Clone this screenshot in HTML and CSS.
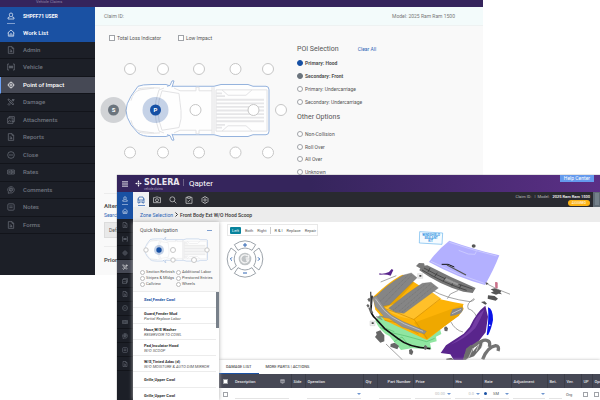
FILE: index.html
```html
<!DOCTYPE html>
<html lang="en">
<head>
<meta charset="utf-8">
<title>Qapter</title>
<link rel="stylesheet" href="styles.css">
</head>
<body>
<svg class="defs" aria-hidden="true">
  <symbol id="i-user" viewBox="0 0 24 24"><path d="M12 3a5 5 0 0 1 5 5c0 3-2 6-5 6s-5-3-5-6a5 5 0 0 1 5-5zM9 14l-6 3v4h18v-4l-6-3"/></symbol>
  <symbol id="i-home" viewBox="0 0 24 24"><path d="M2 12 12 3l10 9M4 10.500v11h16v-11M9 21v-4a3 3 0 0 1 6 0v4"/></symbol>
  <symbol id="i-doc" viewBox="0 0 24 24"><path d="M4 2h11l5 5v15H4zM15 2v5h5M8 12h5M8 17h8M13 12v5"/></symbol>
  <symbol id="i-vehicle" viewBox="0 0 24 24"><path d="M6 3H2v18h4M18 3h4v18h-4M7 8v8M10 8v8M14 8v8M17 8v8M7 12h10"/></symbol>
  <symbol id="i-target" viewBox="0 0 24 24"><circle cx="12" cy="12" r="7.500"/><circle cx="12" cy="12" r="3"/><path d="M12 1.500v4M12 18.500v4M1.500 12h4M18.500 12h4"/></symbol>
  <symbol id="i-tools" viewBox="0 0 24 24"><path d="M3 3l4 1 13 14-2 3L4 7zM14 9l5-6 3 3-5 5M9 13l-6 6 3 3 6-6M17 3v4h4"/></symbol>
  <symbol id="i-attach" viewBox="0 0 24 24"><path d="M6 6V2h16v15h-4M2 6h16v16H2zM3 19l5-6 4 4 3-3 3 4M13 10h1"/></symbol>
  <symbol id="i-minus" viewBox="0 0 24 24"><circle cx="12" cy="12" r="10"/><path d="M6 12h12"/></symbol>
  <symbol id="i-rates" viewBox="0 0 24 24"><path d="M2 6h20v12H2zM13 6v12M6 9v6M9 9v6"/><circle cx="17.500" cy="12" r="2"/></symbol>
  <symbol id="i-comment" viewBox="0 0 24 24"><path d="M12 2a10 9.500 0 1 1-3 18.600L4 22v-5A10 9.500 0 0 1 12 2z"/><path d="M7 9h10M7 13h7"/><circle cx="12" cy="11" r="5"/></symbol>
  <symbol id="i-note" viewBox="0 0 24 24"><rect x="2.500" y="2.500" width="19" height="19" rx="3"/><path d="M7 9h10M7 14h10"/></symbol>
  <symbol id="i-car" viewBox="0 0 24 24"><path d="M3 21v-9l3-9h12l3 9v9h-4v-3H7v3zM3 12h18M6 15h2M16 15h2M1 9h3M20 9h3"/></symbol>
  <symbol id="i-camera" viewBox="0 0 24 24"><path d="M1.500 5h5l2-2h7l2 2h5v15h-21z"/><circle cx="12" cy="12.500" r="4.500"/><path d="M19 8h1"/></symbol>
  <symbol id="i-search" viewBox="0 0 24 24"><circle cx="10" cy="10" r="7.500"/><path d="M15.500 15.500 22 22"/></symbol>
  <symbol id="i-clip" viewBox="0 0 24 24"><path d="M8 4H3v18h18V4h-5M8 2h8v5H8zM7 14l3 3 6-6"/></symbol>
  <symbol id="i-gear" viewBox="0 0 24 24"><path d="M10 2h4l1 3 3-1 3 3-1 3 2.500 2-2.500 2 1 3-3 3-3-1-1 3h-4l-1-3-3 1-3-3 1-3-2.500-2L4 10 3 7l3-3 3 1z"/><circle cx="12" cy="12" r="3.500"/></symbol>
  <symbol id="i-cols" viewBox="0 0 24 24"><path d="M3 3h18v14H3zM3 8h18M9 3v14M15 3v14M8 21h8"/></symbol>
  <symbol id="truck" viewBox="0 -3 146 68" preserveAspectRatio="none">
    <path class="body" d="M14 4Q18 2 28 2H42L47 4H90L97 2H124L129 4H142Q145 4 145 8V54Q145 58 142 58H129L124 60H97L90 58H47L42 60H28Q18 60 14 56L7 47Q2 38 2 31T7 15z"/>
    <path class="body" d="M43 4 46 3 48-2 50-2 48 5M43 58 46 59 48 64 50 64 48 57"/>
    <path class="line" d="M14 7Q20 5 36 6M14 55Q20 57 36 56M7 20Q9 10 16 8L30 6M7 42Q9 52 16 54L30 56M35 8Q31 20 31 31T35 54L40 56M35 8 40 6M38 9Q34 20 34 31T38 53L55 50Q58 40 57 31T55 12zM50 6 56 9H72V5H75V9H88M50 56 56 53H72V57H75V53H88M88 5V57M90 5V57M92 8H143V54H92zM98 8 104 14H122L128 8M98 54 104 48H122L128 54"/>
    <path class="slat" d="M92 19H140M92 23H140M92 27H140M92 31H140M92 35H140M92 39H140M92 43H140M92 12H98M92 15H101M92 47H101M92 50H98"/>
  </symbol>
</svg>

<main class="desktop">
  <section class="window window-back" aria-label="Point of impact">
    <header class="strip"><span>Vehicle Claims</span></header>
    <div class="back-body">
      <nav class="sidebar">
        <div class="account"><svg class="icon"><use href="#i-user"/></svg><span>SHPFF71 USER</span></div>
        <ul class="menu">
          <li class="home"><a href="#"><svg class="icon"><use href="#i-home"/></svg>Work List</a></li>
          <li><a href="#"><svg class="icon"><use href="#i-doc"/></svg>Admin</a></li>
          <li><a href="#"><svg class="icon"><use href="#i-vehicle"/></svg>Vehicle</a></li>
          <li class="current"><a href="#"><svg class="icon"><use href="#i-target"/></svg>Point of Impact</a></li>
          <li><a href="#"><svg class="icon"><use href="#i-tools"/></svg>Damage</a></li>
          <li><a href="#"><svg class="icon"><use href="#i-attach"/></svg>Attachments</a></li>
          <li><a href="#"><svg class="icon"><use href="#i-doc"/></svg>Reports</a></li>
          <li><a href="#"><svg class="icon"><use href="#i-minus"/></svg>Close</a></li>
          <li><a href="#"><svg class="icon"><use href="#i-rates"/></svg>Rates</a></li>
          <li><a href="#"><svg class="icon"><use href="#i-comment"/></svg>Comments</a></li>
          <li><a href="#"><svg class="icon"><use href="#i-note"/></svg>Notes</a></li>
          <li><a href="#"><svg class="icon"><use href="#i-doc"/></svg>Forms</a></li>
        </ul>
      </nav>
      <div class="content">
        <div class="claim-bar"><span>Claim ID:</span><span>Model: 2025 Ram Ram 1500</span></div>
        <div class="impact">
          <div class="impact-left">
            <div class="flags">
              <label><input type="checkbox"> Total Loss Indicator</label>
              <label><input type="checkbox"> Low Impact</label>
            </div>
            <svg class="impact-map" viewBox="100 60 190 100" role="img" aria-label="Vehicle impact points">
              <use href="#truck" x="124" y="80" width="146" height="61"/>
              <g class="spots">
                <circle cx="130" cy="69" r="5.500"/><circle cx="163" cy="69" r="5.500"/><circle cx="199" cy="69" r="5.500"/><circle cx="235.500" cy="69" r="5.500"/><circle cx="268" cy="69" r="5.500"/>
                <circle cx="195.500" cy="110" r="5.500"/><circle cx="253.500" cy="110" r="5.500"/><circle cx="281" cy="110" r="5.500"/>
                <circle cx="130" cy="152.500" r="5.500"/><circle cx="163" cy="152.500" r="5.500"/><circle cx="199" cy="152.500" r="5.500"/><circle cx="235.500" cy="152.500" r="5.500"/><circle cx="268" cy="152.500" r="5.500"/>
              </g>
              <circle class="halo-s" cx="113.500" cy="110" r="13"/><circle class="dot-s" cx="113.500" cy="110" r="5.500"/>
              <circle class="halo-p" cx="155.500" cy="110" r="13"/><circle class="dot-p" cx="155.500" cy="110" r="5.500"/>
              <text x="113.500" y="112">S</text><text x="155.500" y="112">P</text>
            </svg>
          </div>
          <div class="impact-right">
            <div class="poi-head"><h2>POI Selection</h2><a href="#">Clear All</a></div>
            <div class="options first">
              <label class="strong"><input class="blue" type="radio" name="p1" checked> Primary: Hood</label>
              <label class="strong"><input class="grey" type="radio" name="p2" checked> Secondary: Front</label>
              <label><input type="radio" name="p1"> Primary: Undercarriage</label>
              <label><input type="radio" name="p2"> Secondary: Undercarriage</label>
            </div>
            <h2>Other Options</h2>
            <div class="options">
              <label><input type="radio" name="o"> Non-Collision</label>
              <label><input type="radio" name="o"> Roll Over</label>
              <label><input type="radio" name="o"> All Over</label>
              <label><input type="radio" name="o"> Unknown</label>
            </div>
          </div>
        </div>
        <div class="alternate">
          <h3>Alternate</h3>
          <a href="#">Search</a>
          <button type="button">Default</button>
        </div>
        <h3 class="prior">Prior</h3>
      </div>
    </div>
  </section>

  <section class="window window-front" aria-label="Damage">
    <header class="brand">
      <svg class="burger" viewBox="0 0 7 7"><path d="M0 1h7M0 3.500h7M0 6h7"/></svg>
      <svg class="mark" viewBox="0 0 14 14"><path d="M7 0l2 4.500H5zM7 14l2-4.500H5zM0 7l4.500-2v4zM14 7 9.500 5v4zM7 5l2 2-2 2-2-2z"/></svg>
      <div class="logo"><span class="logo-name">SOLERA</span><span class="logo-tag">vehicle claims</span></div>
      <span class="product">Qapter</span>
      <a class="help" href="#">Help Center</a>
    </header>
    <div class="front-body">
      <nav class="rail">
        <div class="account"><svg class="icon"><use href="#i-user"/></svg></div>
        <ul class="menu">
          <li class="home"><a href="#" aria-label="Work List"><svg class="icon"><use href="#i-home"/></svg></a></li>
          <li><a href="#" aria-label="Admin"><svg class="icon"><use href="#i-doc"/></svg></a></li>
          <li><a href="#" aria-label="Vehicle"><svg class="icon"><use href="#i-vehicle"/></svg></a></li>
          <li><a href="#" aria-label="Point of Impact"><svg class="icon"><use href="#i-target"/></svg></a></li>
          <li class="current"><a href="#" aria-label="Damage"><svg class="icon"><use href="#i-tools"/></svg></a></li>
          <li><a href="#" aria-label="Attachments"><svg class="icon"><use href="#i-attach"/></svg></a></li>
          <li><a href="#" aria-label="Reports"><svg class="icon"><use href="#i-doc"/></svg></a></li>
          <li><a href="#" aria-label="Close"><svg class="icon"><use href="#i-minus"/></svg></a></li>
          <li><a href="#" aria-label="Rates"><svg class="icon"><use href="#i-rates"/></svg></a></li>
          <li><a href="#" aria-label="Comments"><svg class="icon"><use href="#i-comment"/></svg></a></li>
          <li><a href="#" aria-label="Notes"><svg class="icon"><use href="#i-note"/></svg></a></li>
          <li><a href="#" aria-label="Forms"><svg class="icon"><use href="#i-doc"/></svg></a></li>
        </ul>
      </nav>
      <div class="work">
        <div class="toolbar">
          <button class="on" type="button" aria-label="Vehicle"><svg class="icon"><use href="#i-car"/></svg></button>
          <button type="button" aria-label="Photos"><svg class="icon"><use href="#i-camera"/></svg></button>
          <button type="button" aria-label="Find"><svg class="icon"><use href="#i-search"/></svg></button>
          <button type="button" aria-label="Checklist"><svg class="icon"><use href="#i-clip"/></svg></button>
          <button type="button" aria-label="Settings"><svg class="icon"><use href="#i-gear"/></svg></button>
          <div class="claim-info">
            <div class="claim-line"><span>Claim ID:</span><span>|&nbsp; Model:</span><b>2025 Ram Ram 1500</b></div>
            <span class="badge">ASSIGNED</span>
          </div>
          <div class="edge"></div>
        </div>
        <div class="crumbs"><a href="#">Zone Selection</a><svg viewBox="0 0 3 5"><path d="M.5.5l2 2-2 2"/></svg><b>Front Body Ext W/O Hood Scoop</b></div>
        <div class="panes">
          <aside class="parts">
            <div class="quick">
              <div class="quick-head"><span>Quick Navigation</span><i></i></div>
              <svg class="quick-map" viewBox="0 0 68 26" role="img" aria-label="Vehicle zones">
                <use href="#truck" x="2" y="0" width="64" height="26"/>
                <g class="spots"><circle cx="4" cy="13" r="2.200"/><circle cx="31" cy="13" r="2.500"/><circle cx="65" cy="13" r="2.200"/><circle cx="31" cy="23" r="2.200"/><circle cx="52" cy="23" r="2.500"/></g>
                <circle class="halo-p" cx="17" cy="13" r="5"/><circle class="dot-p" cx="17" cy="13" r="2.700"/>
              </svg>
              <div class="quick-options">
                <label><input type="radio" name="q"> Section Refinish</label><label><input type="radio" name="q"> Additional Labor</label>
                <label><input type="radio" name="q"> Stripes &amp; Mldgs</label><label><input type="radio" name="q"> Prestored Entries</label>
                <label><input type="radio" name="q"> Callview</label><label><input type="radio" name="q"> Wheels</label>
              </div>
            </div>
            <ul class="part-list">
              <li class="picked"><b>Seal,Fender Cowl</b></li>
              <li><b>Guard,Fender Mud</b><em>Partial Replace Labor</em></li>
              <li><b>Hose,W/S Washer</b><em>RESERVOIR TO COWL</em></li>
              <li><b>Pad,Insulator Hood</b><em>W/O SCOOP</em></li>
              <li><b>W/S,Tinted Adas (d)</b><em>W/O MOISTURE &amp; AUTO DIM MIRROR</em></li>
              <li><b>Grille,Upper Cowl</b></li>
              <li><b>Grille,Upper Cowl</b></li>
            </ul>
          </aside>
          <div class="stage">
            <div class="view">
              <div class="controls">
                <div class="filters">
                  <button class="on" type="button">Left</button><button type="button">Both</button><button type="button">Right</button><button class="split" type="button">R &amp; I</button><button type="button">Replace</button><button type="button">Repair</button>
                </div>
                <svg class="wheel" viewBox="0 0 114 114" role="img" aria-label="Pan and zoom">
                  <g class="ring"><path d="M25 14Q57-9 89 14L78 31Q57 17 36 31zM25 100Q57 123 89 100L78 83Q57 97 36 83zM15 24Q-8 57 15 90L31 78Q18 57 31 36zM99 24Q122 57 99 90L83 78Q96 57 83 36z"/></g>
                  <circle class="hub" cx="57" cy="57" r="19"/><path class="turn" d="M65 48a12 12 0 1 0 3 12h-8M68 44v10h-9"/>
                  <path class="arrows" d="M57 9v12M51 15h12M51 99h12M18 52l-5 5 5 5M96 52l5 5-5 5"/>
                </svg>
              </div>
              <svg class="diagram" viewBox="0 6 480 414" role="img" aria-label="Front body parts">
                <g class="kit"><path d="M209 35 278 39 276 73 208 69z"/><text x="243" y="48">WINDSHIELD</text><text x="243" y="57">SEALANT</text><text x="242" y="66">KIT</text></g>
                <path fill="#b3b0ff" d="M298 62Q375 89 448 106 432 148 405 195 325 174 237 126 262 90 298 62z"/>
                <path fill="none" stroke="#d5d4ff" stroke-width="2" d="M298 67Q370 91 440 108M326 91l29 11 20 1 4-9M243 124q80 42 160 66"/>
                <path fill="none" stroke="#111" stroke-width="3" d="M275 133q20-4 38 8"/><path fill="none" stroke="#555" stroke-width="4" d="M291 135 348 165"/>
                <ellipse cx="371" cy="78" rx="6" ry="5" fill="#555"/>
                <path fill="#777" d="M198 138l9-9 15 1 2 6-14 9zM214 138l18-2Q300 172 377 204l-9 15-28-4Q270 196 208 151z"/>
                <path fill="none" stroke="#333" stroke-width="2" d="M222 144Q290 183 368 207M216 150Q285 191 350 211M240 144l-6 12M262 158l-8 12M287 172l-8 12M311 184l-6 13M333 194l-5 12"/>
                <path fill="#9a9a9a" d="M288 174l39 17-5 5-38-16z"/>
                <path fill="#59258c" d="M88 160q12 3 29-4l8-9 5 3-8 17q-12-5-34-3z"/><path fill="none" stroke="#777" stroke-width="2" d="M92 186 139 167"/>
                <path fill="#eee" stroke="#bbb" d="M203 161h15v14h-15zM60 303h15v14H60z"/><path fill="#444" d="M208 165h6v5h-6zM65 307h6v5h-6z"/>
                <path fill="none" stroke="#777" stroke-width="2" d="M245 210Q290 236 360 245q16-4 12-9-25 15-17 31 15 2 26 25l2 24M325 211l-24 11-9 14M302 305q14 26 37 31M408 190l35 18 38 15"/>
                <path fill="#555" d="M407 187l9 3-8 5zM422 208l12-3 20 7-3 6 5 5-10-2-8 3-16-6 9-4zM414 226l20 2 10 8-7 6-24-6zM393 246l11-2 7 7-5 3z"/>
                <path fill="#ca7189" d="M435 187q5-3 8 1v17h-7z"/>
                <path fill="#90e6a1" d="M76 302Q90 335 118 348L153 390 185 385 244 388 240 369 260 364 258 350 274 342 269 323 230 300 100 270z"/>
                <path fill="none" stroke="#55bd6c" stroke-width="2" d="M90 322l34 16 40 9 66 18 24-10M132 365l24-14 25 31M107 325l26 10"/>
                <path fill="#fdb307" d="M158 164Q125 178 69 231L76 269 104 301 140 318 231 360 326 286 341 252Q306 246 268 237L224 207z"/>
                <path fill="#e8a300" d="M161 166 191 188 126 262 101 266 87 245 70 232z"/>
                <path fill="#efa800" d="M229 358 192 308 337 255 341 267 326 288z"/>
                <path fill="#ffc02a" d="M101 264 123 255 240 212 274 236 192 297q-43 1-91-33z"/>
                <path fill="none" stroke="#d18c00" stroke-width="2" d="M101 265l42 14 50 20 39 58M104 301l42 8 60 33M192 298l78-61"/>
                <path class="mesh" d="M161 165l23-6 17 14-83 81-19 4-22-27q32-36 84-66zM217 190l26-3 22 17-103 76-25-3-21-12q55-46 101-75z"/>
                <path fill="none" stroke="#555" stroke-width="1" stroke-dasharray="3 3" d="M172 168 88 246M184 166 102 251M226 193 130 270M240 193 146 275M252 198 154 278"/>
                <path fill="#888" d="M301 282l7-14 29-6q5 9-5 18-19 8-31 9z"/><path fill="none" stroke="#ddd" stroke-width="2" d="M306 281l27-13"/>
                <path fill="#929292" stroke="#777" d="M68 232l12-4 25 38 19 19 33 19 72 30-6 8-66-21-40-26-28-5 8 10-19-10 24-1-26-29z"/>
                <path fill="none" stroke="#d7d7d7" stroke-width="2" d="M76 236l26 35 22 19 40 22 55 22"/>
                <path fill="none" stroke="#101010" stroke-width="5" d="M66 227 63 265q-3 16 15 32l26 29 40 30q33 27 97 30"/>
                <path fill="none" stroke="#555" stroke-width="4" d="M62 215l1 40"/>
                <path fill="#666" d="M52 238l6-5 5 8-6 5zM49 256l5-4 5 6-5 5zM55 264l7-3 8 18-9 1zM78 336l13-5 6 8 6 7v18l-12 4-16-17 5-7zM122 372l12-4 13 10-5 10-21-8zM177 390l7-4 6 9-4 10-8-3zM282 323l6-4 6 6-2 9-8-1zM222 378l5-3 6 7-5 8-6-2z"/>
                <path fill="none" stroke="#777" stroke-width="2" d="M108 372 158 420"/>
                <path fill="#59258c" d="M406 257q-27 20-47 64l-18 20-53 35-16 23 29 4 11 18h34l15-33 20-18 26-33 7-47z"/>
                <path fill="#743da5" d="M403 268q-25 20-37 52-18 25-65 54 43-16 75-50 20-34 27-56z"/>
                <path fill="#0913e8" d="M414 262q15 4 15 38-5 28-15 46l-4-2q7-44 4-82z"/><circle cx="419" cy="316" r="2.500" fill="#fff"/>
                <path fill="none" stroke="#747474" stroke-width="10" d="M344 419q5-30 30-43 28-21 38-14 10 3 6 19M398 418q14-37 39-41 12 1 7 16"/>
                <path fill="#6c6c6c" d="M348 386l15-12 8 7-3 14 20-24 11-8-4 19-23 27-31 11z"/><path fill="none" stroke="#ddd" stroke-width="2" d="M369 384l-15 34M387 372l-8 22M401 366l-7 18"/>
                <path fill="#444" d="M289 416l15-2 8 5h-23z"/>
              </svg>
            </div>
            <div class="bottom">
              <div class="tabs"><a class="on" href="#">DAMAGE LIST</a><a href="#">MORE PARTS | ACTIONS</a></div>
              <table>
                <colgroup><col class="c14"><col class="c58"><col class="c14"><col class="c58"><col class="c14"><col class="c36"><col class="c40"><col class="c29"><col class="c29"><col class="c36"><col class="c17"><col class="c17"><col class="c11"><col></colgroup>
                <thead><tr><th><input type="checkbox" aria-label="Select all"></th><th><div class="with-icon">Description<svg class="icon"><use href="#i-cols"/></svg></div></th><th>Side</th><th>Operation</th><th>Qty</th><th class="end">Part Number</th><th>Price</th><th>Hrs</th><th>Rate</th><th>Adjustment</th><th>Bet.</th><th>Ver.</th><th>UP</th><th>Ope</th></tr></thead>
                <tbody><tr><td><input type="checkbox" aria-label="Select row"></td><td><div class="field"></div></td><td></td><td><div class="field"><i class="caret"></i></div></td><td></td><td><div class="field"></div></td><td><div class="field faint">00.00<i class="caret"></i></div></td><td><div class="field faint">0.0<i class="caret"></i></div></td><td><div class="field rate"><i class="bullet"></i>SM<i class="caret"></i></div></td><td><div class="field"><i class="caret"></i></div></td><td><div class="field"></div></td><td>Org</td><td><input type="checkbox" aria-label="UP"></td><td><input type="checkbox" aria-label="Open"></td></tr></tbody>
              </table>
            </div>
          </div>
        </div>
      </div>
    </div>
  </section>
</main>
</body>
</html>
```
FILE: styles.css
```css
* { box-sizing: border-box; }
body { margin: 0; background: #fff; color: #555; font: 5px/6px Roboto, "Liberation Sans", sans-serif; }
h2, h3, ul { margin: 0; padding: 0; }
ul { list-style: none; }
a { color: #2b63b5; text-decoration: none; }
button { font: inherit; color: inherit; border: 0; padding: 0; background: none; white-space: nowrap; }
.defs { position: absolute; width: 0; height: 0; }
.icon { display: block; width: 8px; height: 8px; fill: none; stroke: currentColor; stroke-width: 2; flex: none; }
input { appearance: none; flex: none; margin: 0; width: 6px; height: 6px; border: 1px solid #a0a3a8; background: #fff; }
input[type="radio"] { border-radius: 50%; }
label { display: flex; align-items: center; gap: 2px; white-space: nowrap; }

.desktop { position: relative; height: 100vh; overflow: hidden; }
.window { position: absolute; overflow: hidden; display: flex; flex-direction: column; }
.window-back { left: 0; top: 0; width: calc(100% - 117px); height: 275px; background: #f9f9f9; }
.window-front { left: 117px; top: 175px; right: 0; bottom: 0; background: #fff; box-shadow: 0 0 1px #666; }

/* Impact window */
.strip { flex: none; height: 7px; padding-left: 36px; background: #35245c; color: #8f86a8; font-size: 4px; line-height: 4px; }
.back-body { flex: 1; display: flex; }
.sidebar { flex: none; width: 95px; background: #1c1f27; font-size: 6px; line-height: 8px; }
.account { background: #1a51a3; color: #fff; font-weight: 700; }
.sidebar .account { display: flex; align-items: center; gap: 8px; height: 17px; padding-left: 7px; font-size: 5px; background: linear-gradient(#7f9fd0, #7f9fd0) 7px 16px / 8px 1px no-repeat #1a51a3; }
.menu { display: grid; grid-template-rows: repeat(12, 1fr); }
.sidebar .menu { height: 210px; }
.menu li { border-bottom: 1px solid #12141a; color: #717680; }
.menu a { display: flex; align-items: center; gap: 8px; height: 100%; color: inherit; font-weight: 500; }
.sidebar .menu a { padding-left: 7px; }
.menu .home { background: #1a51a3; color: #fff; border-color: #1a51a3; }
.menu .current { background: #464955; color: #fff; }
.sidebar .current { border-left: 1px solid #6ba0f5; }
.sidebar .current a { padding-left: 6px; }
.sidebar .home a { border-top: 1px solid transparent; }
.content { flex: 1; min-width: 0; }
.claim-bar { display: flex; justify-content: space-between; align-items: center; height: 19px; padding: 0 28px 0 9px; background: #f3fbfb; border-bottom: 1px solid #eef2f2; color: #777; }
.impact { display: flex; height: 167px; }
.impact-left { flex: none; width: 202px; }
.flags { display: flex; gap: 17px; padding: 9px 0 0 14px; }
.impact-map { display: block; width: 190px; height: 100px; margin: 19px 0 0 5px; overflow: visible; }
.body { fill: #fefefe; stroke: #8eaedb; stroke-width: 1; }
.line { fill: none; stroke: #e0e0e2; stroke-width: 1; }
.slat { fill: none; stroke: #e6e6e8; stroke-width: 2; }
.spots circle { fill: #fff; stroke: #c6c6c6; stroke-width: 1; }
.halo-s { fill: #6b747d; opacity: .28; }
.halo-p { fill: #1a51a3; opacity: .25; }
.dot-s { fill: #6b747d; }
.dot-p { fill: #1650a4; }
.impact-map text { fill: #fff; font-size: 6px; font-weight: 700; text-anchor: middle; }
.impact-right { padding-top: 19px; }
h2 { font-size: 7px; line-height: 8px; font-weight: 400; }
.poi-head { display: flex; align-items: center; gap: 19px; }
.options { display: grid; grid-template-rows: repeat(4, 1fr); height: 50px; margin-top: 7px; }
.options.first { height: 52px; margin: 3px 0 5px; }
.strong { font-weight: 700; }
input.blue { background: #1650a4; border-color: #1650a4; }
input.grey { background: #6b747d; border-color: #6b747d; }
h3 { font-size: 6px; line-height: 8px; font-weight: 700; }
.alternate { display: flex; flex-direction: column; align-items: flex-start; gap: 2px; margin-left: 9px; padding: 8px 0; border: solid #ececec; border-width: 1px 0; }
.alternate button { width: 60px; height: 16px; margin-top: 2px; padding-left: 4px; text-align: left; background: #e9e9e9; border: 1px solid #dcdcdc; }
.prior { margin: 9px 0 0 9px; }

/* Damage window */
.brand { flex: none; display: flex; align-items: center; height: 17px; padding: 0 6px 0 5px; background: linear-gradient(90deg, #35255c 40%, #5b2f86); color: #fff; }
.burger { width: 6px; height: 6px; stroke: #fff; stroke-width: 1; }
.mark { width: 7px; height: 7px; margin: 0 2px 1px 7px; fill: #fff; }
.logo { display: flex; flex-direction: column; width: 40px; padding-top: 1px; background: linear-gradient(#6c6188, #6c6188) right 2px / 1px 7px no-repeat; }
.logo-name { font: 700 8px/9px "DejaVu Sans", sans-serif; color: #e8e5ee; }
.logo-tag { font-size: 3px; line-height: 4px; color: #a49cba; }
.product { margin-left: 5px; font-size: 8px; line-height: 10px; }
.help { align-self: flex-start; margin-left: auto; padding: 0 4px; background: #659aed; color: #fff; line-height: 7px; }
.front-body { flex: 1; min-height: 0; display: flex; }
.rail { flex: none; width: 16px; background: #1c1f27; }
.rail .icon { width: 6px; height: 6px; }
.rail .account { display: flex; justify-content: center; align-items: center; height: 13px; background: linear-gradient(#7f9fd0, #7f9fd0) center bottom / 6px 1px no-repeat #1a51a3; }
.rail .menu { height: 166px; }
.rail .menu a { justify-content: center; }
.work { flex: 1; min-width: 0; display: flex; flex-direction: column; }
.toolbar { flex: none; display: flex; height: 15px; background: #292a30; color: #ddd; }
.toolbar button { width: 16px; display: flex; justify-content: center; align-items: center; }
.toolbar button.on { background: linear-gradient(#5f87c4, #5f87c4) center 13px / 7px 1px no-repeat #f2f2f4; color: #1a51a3; }
.claim-info { margin-left: auto; padding: 2px 3px 0 0; display: flex; flex-direction: column; align-items: flex-end; gap: 1px; font-size: 4px; line-height: 5px; }
.claim-line { display: flex; gap: 3px; color: #bbb; }
.claim-line b { color: #fff; font-weight: 500; }
.badge { padding: 0 4px; border-radius: 3px; background: #fdb415; color: #fff; font-size: 3px; line-height: 6px; }
.edge { width: 7px; background: #74808a; border: solid #5f6a74; border-width: 1px 1px 2px 2px; }
.crumbs { flex: none; display: flex; align-items: center; gap: 2px; height: 15px; padding-left: 7px; background: #ececec; color: #333; }
.crumbs b { font-weight: 500; }
.crumbs svg { width: 3px; height: 5px; fill: none; stroke: #333; }
.panes { flex: 1; min-height: 0; display: flex; }
.parts { flex: none; width: 86px; display: flex; flex-direction: column; box-shadow: 0 0 4px #aaa; z-index: 1; }
.quick { flex: none; height: 70px; padding: 5px 7px 0; background: #fafafa; border-bottom: 1px solid #ececec; }
.quick-head { display: flex; justify-content: space-between; align-items: center; }
.quick-head i { width: 5px; height: 1px; background: #7e9fd0; }
.quick-map { display: block; width: 68px; height: 26px; margin: 4px 0 0 2px; }
.quick-options { display: grid; grid-template-columns: 36px 1fr; grid-auto-rows: 6px; margin-top: 6px; font-size: 4px; line-height: 6px; }
.quick-options label { gap: 1px; }
.quick-options input { width: 5px; height: 5px; border-color: #bbb; }
.part-list { flex: 1; min-height: 0; overflow: hidden; background: linear-gradient(#78808a, #78808a) right 0 / 3px 36px no-repeat #fff; }
.part-list li { display: flex; flex-direction: column; justify-content: center; height: 16px; margin-right: 3px; padding-left: 11px; border-bottom: 1px solid #ececec; color: #333; font-size: 4px; line-height: 5px; white-space: nowrap; }
.part-list em { color: #555; }
.part-list .picked { color: #1a51a3; }
.stage { flex: 1; min-width: 0; display: flex; flex-direction: column; }
.view { flex: 1; min-height: 0; display: flex; gap: 32px; padding-left: 8px; }
.controls { flex: none; padding-top: 2px; }
.filters { display: flex; align-items: center; width: 91px; height: 12px; padding: 0 2px; gap: 4px; border: 1px solid #e8e8e8; font-size: 4px; line-height: 7px; }
.filters .on { padding: 0 2px; background: #08839c; color: #fff; border-radius: 1px; }
.filters .split { border-left: 1px solid #ccc; padding-left: 3px; }
.wheel { display: block; width: 38px; height: 38px; margin: 4px 0 0 -1px; }
.ring { fill: #fff; stroke: #9da4ab; stroke-width: 3; }
.hub { fill: #bfc3c5; }
.turn { fill: none; stroke: #f3f3f3; stroke-width: 4; }
.arrows { fill: none; stroke: #2f65b3; stroke-width: 3; }
.diagram { flex: none; width: 160px; height: 138px; }
.kit path { fill: #f5fbff; stroke: #69b5ed; stroke-width: 2; }
.kit text { fill: #2d91df; font-size: 9px; font-weight: 700; text-anchor: middle; }
.mesh { fill: #858585; stroke: #777; }
.bottom { flex: none; height: 40px; background: #fff; box-shadow: 0 0 3px #bbb; }
.tabs { display: flex; height: 14px; }
.tabs a { padding: 4px 7px 0; color: #555; font-size: 4px; font-weight: 500; }
.tabs .on { border-bottom: 1px solid #1a51a3; }
table { width: 100%; table-layout: fixed; border-collapse: collapse; font-size: 4px; line-height: 5px; }
.c11 { width: 11px; } .c14 { width: 14px; } .c17 { width: 17px; } .c29 { width: 29px; }
.c36 { width: 36px; } .c40 { width: 40px; } .c58 { width: 58px; }
th, td { padding: 0 2px; text-align: left; overflow: hidden; white-space: nowrap; }
th { height: 14px; background: #464855; color: #e2e2e6; font-weight: 500; border-right: 1px solid #3b3d48; }
th:first-child { border-right: 0; }
th:first-child, td:first-child { padding-left: 4px; }
th:last-child { padding-right: 0; border-right: 0; }
td { height: 12px; }
th input, td input { display: block; width: 5px; height: 5px; }
.end { text-align: right; }
.with-icon { display: flex; justify-content: space-between; align-items: center; padding-right: 4px; }
.with-icon .icon { width: 5px; height: 5px; }
.field { display: flex; justify-content: flex-end; align-items: center; gap: 2px; height: 10px; border-bottom: 1px solid #e4e4e4; }
.faint { color: #bbb; }
.rate { justify-content: space-between; }
.caret { border: solid transparent; border-width: 2px 2px 0; border-top-color: #6f95cf; }
.bullet { width: 3px; height: 3px; border-radius: 50%; background: #1a51a3; }
```
